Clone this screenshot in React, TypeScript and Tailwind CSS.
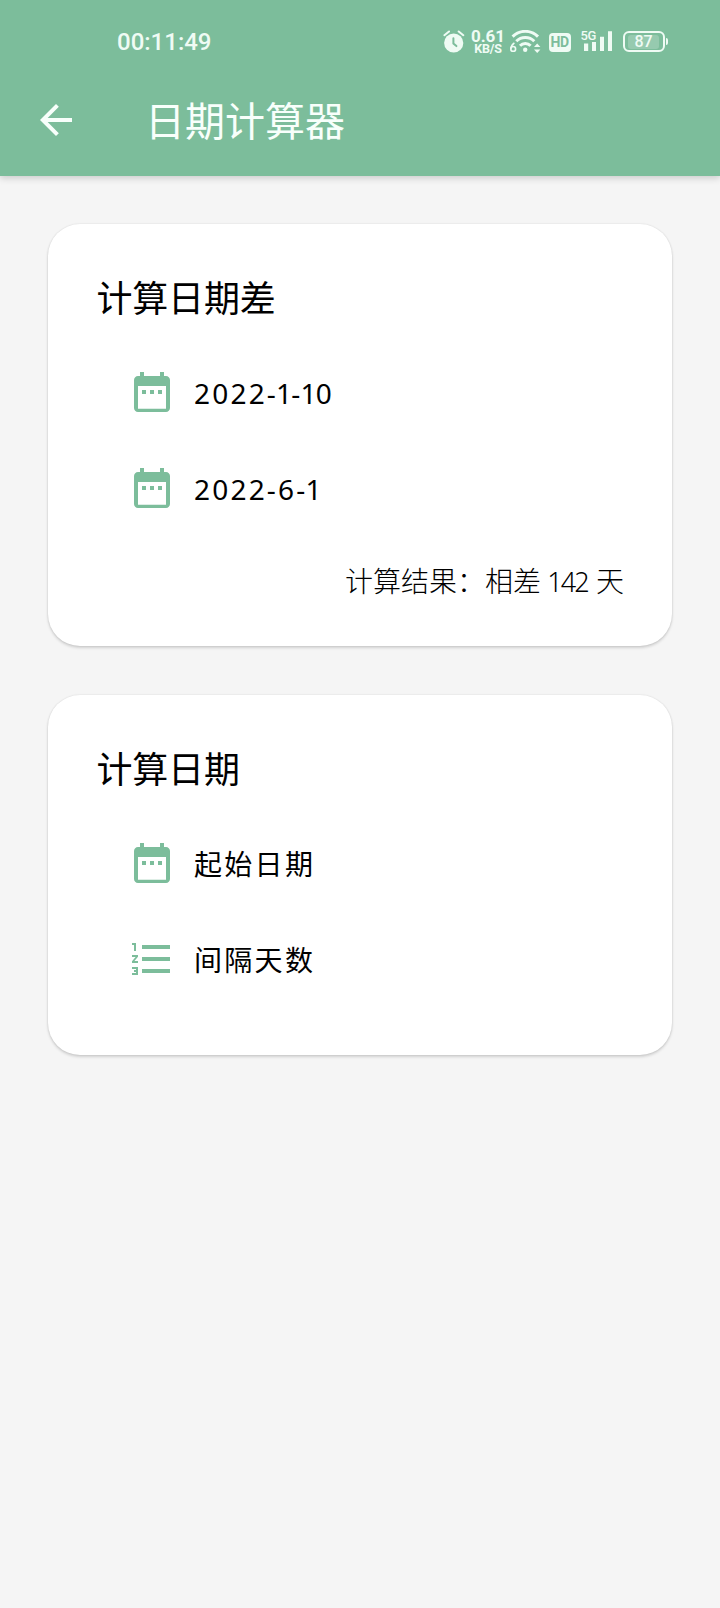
import type { ReactNode } from "react";

const cjk = "font-['Noto_Sans_CJK_SC',sans-serif]";

function DateRangeIcon() {
  return (
    <svg viewBox="0 0 24 24" className="size-12 shrink-0 fill-[#7cbd9b]">
      <path d="M9 11H7v2h2v-2zm4 0h-2v2h2v-2zm4 0h-2v2h2v-2zm2-7h-1V2h-2v2H8V2H6v2H5c-1.11 0-1.99.9-1.99 2L3 20c0 1.1.89 2 2 2h14c1.1 0 2-.9 2-2V6c0-1.1-.9-2-2-2zm0 16.4H5V9h14v11.4z" />
    </svg>
  );
}

function NumberedListIcon() {
  return (
    <svg viewBox="0 0 24 24" className="size-12 shrink-0 fill-[#7cbd9b]">
      <path d="M2 17h2v.5H3v1h1v.5H2v1h3v-4H2v1zm1-9h1V4H2v1h1v3zm-1 3h1.8L2 13.1v.9h3v-1H3.2L5 10.9V10H2v1zm5-6v2h14V5H7zm0 14h14v-2H7v2zm0-6h14v-2H7v2z" />
    </svg>
  );
}

function StatusBar() {
  return (
    <div className="flex h-20 items-start pt-[30px] text-[#effbf4]">
      <div className="ml-[117px] w-[326px] font-['Roboto',sans-serif] text-[24px] leading-[24px] font-medium">
        00:11:49
      </div>
      <svg viewBox="0 0 22 24" className="h-6 w-[22px]" fill="none" stroke="currentColor" strokeLinecap="round">
        <circle cx="10.7" cy="13" r="9.6" fill="currentColor" stroke="none" />
        <path d="M1.4 5.2 6 1.5M20.3 5.2 15.7 1.5" strokeWidth="2" />
        <path d="M10.4 8.3v5.2l3 2.6" stroke="#7cbd9b" strokeWidth="2" />
      </svg>
      <div className="ml-2 flex w-[30px] flex-col items-center font-['Roboto',sans-serif] font-bold">
        <span className="h-[13px] text-[17px] leading-[13px]">0.61</span>
        <span className="h-[12px] text-[12.5px] leading-[12px] tracking-[-0.2px]">KB/S</span>
      </div>
      <svg
        viewBox="0 0 31 24"
        className="ml-[6.5px] h-6 w-[31px]"
        fill="none"
        stroke="currentColor"
        strokeWidth="3"
      >
        <path d="M2.6 6.6a18 18 0 0 1 25.4 0" />
        <path d="M6.3 11.3a12.6 12.6 0 0 1 18 0" />
        <path d="M10 15.8a7.4 7.4 0 0 1 10.6 0" />
        <circle cx="15.2" cy="19.8" r="2.2" fill="currentColor" stroke="none" />
        <circle cx="3.2" cy="18.9" r="2.4" strokeWidth="1.6" />
        <path d="M4.4 12.8Q1.2 15 .9 18.8" strokeWidth="1.6" />
        <path d="m24 17 3.2-3.6 3.2 3.6zM24 19.4l3.2 3.6 3.2-3.6z" fill="currentColor" stroke="none" />
      </svg>
      <div className="mt-[2.5px] ml-[8px] flex h-[19px] w-[22px] items-center justify-center rounded-[4px] bg-[#effbf4] font-['Roboto',sans-serif] text-[14px] leading-none font-bold tracking-[-0.5px] text-[#7cbd9b]">
        HD
      </div>
      <div className="relative ml-[10px] h-6 w-[33px]">
        <svg viewBox="0 0 33 24" className="h-6 w-[33px]" fill="currentColor">
          <path d="M3 13.5h4.2V21H3zM11 11.5h4V21h-4zM19 6.7h4V21h-4zM27 1.3h4V21h-4z" />
        </svg>
        <span className="absolute top-[-1px] left-0 h-[13px] bg-[#7cbd9b] font-['Roboto',sans-serif] text-[13px] leading-[13px] font-medium tracking-[-0.5px]">
          5G
        </span>
      </div>
      <div className="mt-[0.5px] ml-[9px] flex h-[22px] items-center gap-[1px]">
        <div className="flex h-[21px] w-[42px] items-center justify-center rounded-[6px] border-2 border-[#effbf4]">
          <span className="flex h-[14px] w-[31px] items-center justify-center rounded-[3px] bg-white/20 pt-px font-['Roboto',sans-serif] text-[16px] leading-none font-medium">
            87
          </span>
        </div>
        <span className="h-[7px] w-[2px] rounded-r-full bg-[#effbf4]" />
      </div>
    </div>
  );
}

function Card({ title, className, children }: { title: string; className: string; children: ReactNode }) {
  return (
    <section
      className={`rounded-[32px] bg-white px-12 pt-12 shadow-[0_2px_3px_rgba(0,0,0,0.15),0_0_2px_rgba(0,0,0,0.12)] ${className}`}
    >
      <h2 className={`h-[56px] pl-[0.5px] text-[36px] leading-[48px] tracking-[-0.2px] ${cjk}`}>{title}</h2>
      <div className="mt-4 pl-8">{children}</div>
    </section>
  );
}

function Field({ icon, children }: { icon: ReactNode; children: ReactNode }) {
  return (
    <div className="flex h-24 items-center gap-[18px]">
      {icon}
      {children}
    </div>
  );
}

/* Noto Sans digits are tabular, so the one is pulled in to sit proportionally. */
function DateText({ value }: { value: string }) {
  return (
    <span className="flex pt-[2px] font-['Noto_Sans',sans-serif] text-[28px] leading-[48px] tracking-[2.2px]">
      {value.split(/(1)/).map((part, i) =>
        part === "1" ? (
          <span key={i} className="-mr-[3px] -ml-[2px]">
            {part}
          </span>
        ) : (
          <span key={i}>{part}</span>
        ),
      )}
    </span>
  );
}

export default function App() {
  const labelText = `text-[28px] leading-[48px] tracking-[2.3px] ${cjk}`;
  return (
    <div className="min-h-[1608px] bg-[#f5f5f5] text-black">
      <header className="h-44 bg-[#7cbd9b] shadow-[0_2px_7px_rgba(0,0,0,0.18)]">
        <StatusBar />
        <div className="flex h-20 items-center pl-8 text-[#f8fffb]">
          <svg viewBox="0 0 24 24" className="size-12" fill="currentColor">
            <path d="M20 11H7.83l5.59-5.59L12 4l-8 8 8 8 1.41-1.41L7.83 13H20v-2z" />
          </svg>
          <h1 className={`ml-[65px] pb-[2px] text-[40px] leading-[56px] ${cjk}`}>日期计算器</h1>
        </div>
      </header>
      <main className="flex flex-col gap-[49px] px-12 pt-12">
        <Card title="计算日期差" className="h-[422px]">
          <Field icon={<DateRangeIcon />}>
            <DateText value="2022-1-10" />
          </Field>
          <Field icon={<DateRangeIcon />}>
            <DateText value="2022-6-1" />
          </Field>
          <p className="mt-[24px] text-right font-['Noto_Sans_CJK_SC',sans-serif] text-[28px] leading-[40px] font-light">
            计算结果：相差{" "}
            <span className="font-['Noto_Sans',sans-serif] text-[27px] font-light">
              <span className="tracking-[-1.8px]">14</span>2
            </span>{" "}
            天
          </p>
        </Card>
        <Card title="计算日期" className="h-[360px]">
          <Field icon={<DateRangeIcon />}>
            <span className={labelText}>起始日期</span>
          </Field>
          <Field icon={<NumberedListIcon />}>
            <span className={labelText}>间隔天数</span>
          </Field>
        </Card>
      </main>
    </div>
  );
}
